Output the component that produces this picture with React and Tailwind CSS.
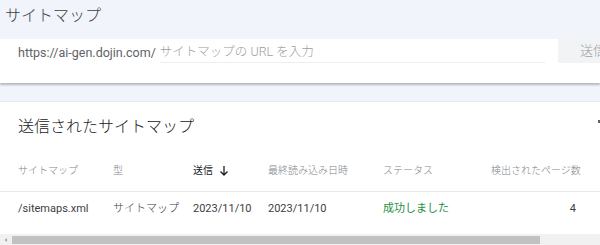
const jp = { fontFamily: 'Roboto, "Noto Sans CJK JP", sans-serif' };

const App = () => {
    return (
        <div className="w-[600px] h-[245px] overflow-hidden bg-[#f1f4fb] text-[#202124] font-light" style={jp}>
            <div className="h-[39px] pl-[5px] pt-[4px] text-[16px] leading-[24px] text-[#3c4043]">サイトマップ</div>

            <div className="h-[44px] bg-white shadow-[0_2px_2px_rgba(0,0,0,0.25)] flex items-start">
                <div className="flex items-end pl-[18px] h-[24px] flex-1">
                    <span className="text-[12.5px] leading-[20px] text-[#5f6368] font-normal">https://ai-gen.dojin.com/</span>
                    <div className="ml-[4px] mr-[13px] flex-1 border-b border-[#eeeeee] h-[22px] flex items-end">
                        <span className="text-[12.5px] leading-[20px] text-[#9aa0a6]">サイトマップの URL を入力</span>
                    </div>
                </div>
                <div className="w-[42px] h-[24px] bg-[#f1f3f4] pl-[22px] text-[13px] leading-[24px] text-[#9aa0a6] whitespace-nowrap">送信</div>
            </div>

            <div className="mt-[18px] bg-white border-t border-[#e8eaed]">
                <div className="flex justify-between items-center h-[50px] pl-[18px]">
                    <span className="text-[16px] leading-[24px] text-[#202124]">送信されたサイトマップ</span>
                    <span className="w-[2px] h-[3px] bg-[#5f6368] self-start mt-[18px]" />
                </div>
                <div className="grid grid-cols-[95px_80px_75px_115px_108px_87px] pl-[18px] h-[40px] items-center border-b border-[#e8eaed] text-[10px] text-[#80868b] pb-[2px] whitespace-nowrap">
                    <span>サイトマップ</span>
                    <span>型</span>
                    <span className="text-[#202124] font-normal flex items-center gap-[6px]">
                        送信
                        <svg width="10" height="11" viewBox="0 0 10 11" fill="none" stroke="#202124" strokeWidth="1.3">
                            <path d="M5 1v9M1.5 6.5L5 10l3.5-3.5" />
                        </svg>
                    </span>
                    <span>最終読み込み日時</span>
                    <span>ステータス</span>
                    <span>検出されたページ数</span>
                </div>
                <div className="grid grid-cols-[95px_80px_75px_115px_108px_87px] pl-[18px] h-[34px] items-center text-[11px] text-[#3c4043] font-normal whitespace-nowrap">
                    <span>/sitemaps.xml</span>
                    <span className="font-light">サイトマップ</span>
                    <span>2023/11/10</span>
                    <span>2023/11/10</span>
                    <span className="text-[#1e8e3e]">成功しました</span>
                    <span className="text-right pr-[2px]">4</span>
                </div>
                <div className="h-[8px]" />
                <div className="h-[12px] bg-[#f1f1f1] flex items-center">
                    <svg width="12" height="12" viewBox="0 0 12 12">
                        <path d="M7 4v4L4.5 6z" fill="#a3a3a3" />
                    </svg>
                    <div className="w-[528px] h-[8px] bg-[#c1c1c1]" />
                </div>
            </div>
        </div>
    );
};

export default App;
